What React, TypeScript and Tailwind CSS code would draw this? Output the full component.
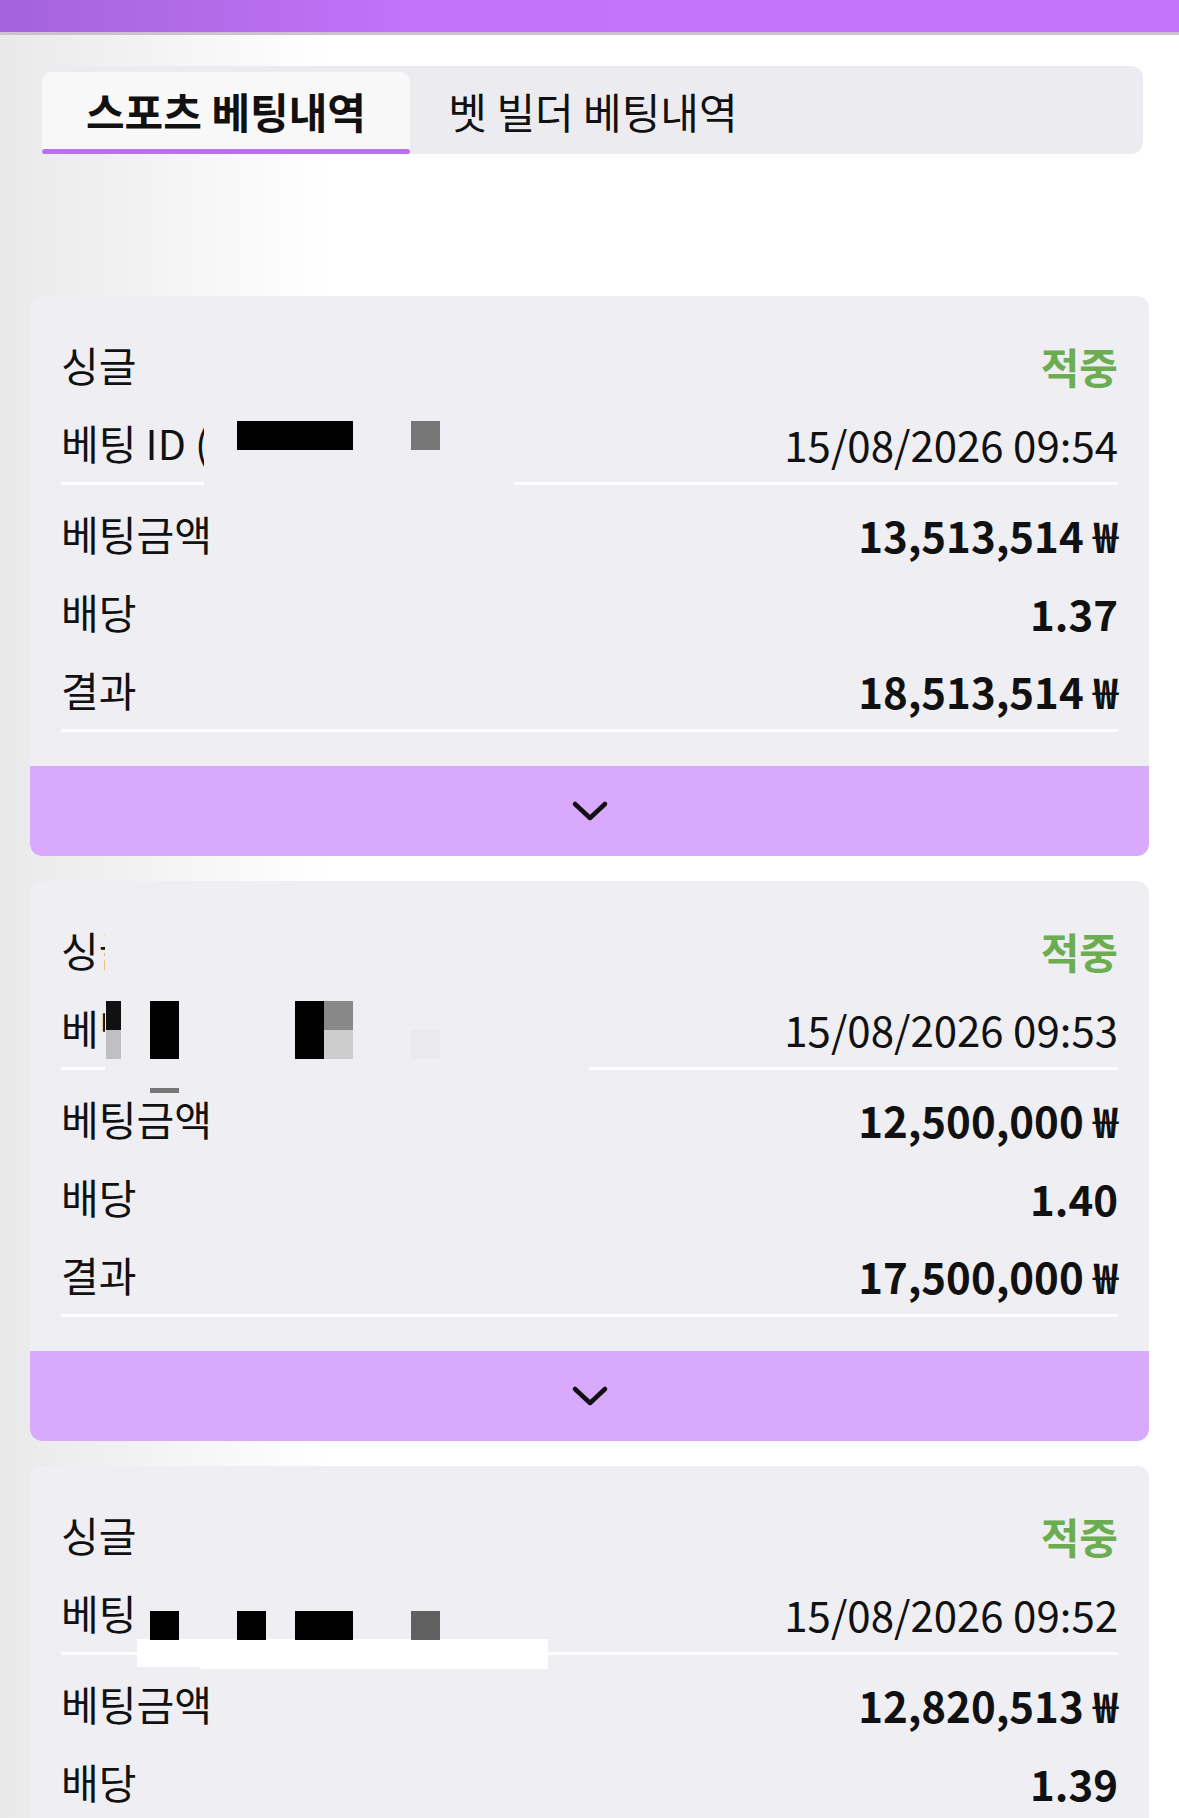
import React from "react";

type Bet = {
  time: string;
  stake: string;
  odds: string;
  result: string;
};

const bets: Bet[] = [
  { time: "15/08/2026 09:54", stake: "13,513,514", odds: "1.37", result: "18,513,514" },
  { time: "15/08/2026 09:53", stake: "12,500,000", odds: "1.40", result: "17,500,000" },
  { time: "15/08/2026 09:52", stake: "12,820,513", odds: "1.39", result: "17,820,513" },
];

const font = { fontFamily: '"Noto Sans CJK KR", "Noto Sans", sans-serif' };

function Block({ x, y, w, h, c }: { x: number; y: number; w: number; h: number; c: string }) {
  // redaction patches sit over the card content
  return (
    <div
      className="absolute"
      style={{ left: x, top: y, width: w, height: h, background: c }}
    />
  );
}

function Redaction({ index }: { index: number }) {
  const bg = "#eeeef3";
  if (index === 0) {
    return (
      <>
        <Block x={174} y={100} w={310} h={92} c={bg} />
        <Block x={207} y={125} w={116} h={29} c="#000" />
        <Block x={381} y={125} w={29} h={29} c="#777" />
      </>
    );
  }
  if (index === 1) {
    return (
      <>
        <Block x={75} y={40} w={484} h={172} c={bg} />
        <Block x={76} y={120} w={15} h={29} c="#111" />
        <Block x={76} y={149} w={15} h={29} c="#c0c0c4" />
        <Block x={120} y={120} w={29} h={58} c="#000" />
        <Block x={265} y={120} w={29} h={58} c="#000" />
        <Block x={294} y={120} w={29} h={29} c="#888" />
        <Block x={294} y={149} w={29} h={29} c="#ccc" />
        <Block x={381} y={149} w={29} h={29} c="#e9e9ee" />
        <Block x={120} y={207} w={29} h={5} c="#777" />
      </>
    );
  }
  return (
    <>
      <Block x={107} y={118} w={411} h={58} c={bg} />
      <Block x={107} y={173} w={411} h={28} c="#fff" />
      <Block x={170} y={190} w={348} h={13} c="#fff" />
      <Block x={120} y={145} w={29} h={29} c="#000" />
      <Block x={207} y={145} w={29} h={29} c="#000" />
      <Block x={265} y={145} w={58} h={29} c="#000" />
      <Block x={381} y={145} w={29} h={29} c="#606060" />
    </>
  );
}

function Row({ label, children }: { label: string; children: React.ReactNode }) {
  return (
    <div className="flex h-[78px] items-center justify-between">
      <span className="text-[41px] text-[#111]">{label}</span>
      {children}
    </div>
  );
}

function BetCard({ bet, index }: { bet: Bet; index: number }) {
  return (
    <div className="relative overflow-hidden rounded-[12px] bg-[#eeeef3]">
      <div className="px-[31px] pt-[30px]">
        <Row label="싱글">
          <span className="text-[42px] font-bold text-[#6cad52]">적중</span>
        </Row>
        <Row label="베팅 ID (">
          <span className="text-[42px] text-[#111]">{bet.time}</span>
        </Row>
        <div className="h-[3px] bg-white" />
        <div className="mt-[10px]">
          <Row label="베팅금액">
            <span className="text-[42px] font-bold text-[#111]">{bet.stake} ₩</span>
          </Row>
          <Row label="배당">
            <span className="text-[42px] font-bold text-[#111]">{bet.odds}</span>
          </Row>
          <Row label="결과">
            <span className="text-[42px] font-bold text-[#111]">{bet.result} ₩</span>
          </Row>
        </div>
        <div className="h-[3px] bg-white" />
      </div>
      <div className="mt-[34px] flex h-[90px] items-center justify-center rounded-b-[12px] bg-[#d8a9fc]">
        <svg width="40" height="26" viewBox="0 0 40 26" fill="none">
          <polyline
            points="5,6 20,20 35,6"
            stroke="#111"
            strokeWidth="4.5"
            strokeLinecap="round"
            strokeLinejoin="round"
          />
        </svg>
      </div>
      <Redaction index={index} />
    </div>
  );
}

export default function App() {
  return (
    <div
      className="min-h-[1818px] w-full overflow-hidden bg-[linear-gradient(to_right,#e9e9e9,#ffffff_28%)]"
      style={font}
    >
      <div className="h-[32px] bg-[linear-gradient(to_right,#a463d9,#c273fa_35%,#c474fb)]" />
      <div className="h-[3px] bg-[#cbc3cf]" />

      <div className="ml-[39px] mr-[36px] mt-[31px] flex h-[88px] rounded-[12px] bg-[#ececf0] pl-[3px] pt-[6px]">
        <div className="flex w-[368px] flex-col overflow-hidden rounded-t-[10px] bg-[#f8f8f9]">
          <div className="flex flex-1 items-center justify-center text-[42px] font-bold text-[#111]">
            스포츠 베팅내역
          </div>
          <div className="h-[5px] rounded-full bg-[#b96ff0]" />
        </div>
        <div className="flex w-[366px] items-center justify-center pb-[6px] text-[42px] text-[#111]">
          벳 빌더 베팅내역
        </div>
      </div>

      <div className="mt-[142px] flex flex-col gap-[25px] px-[30px]">
        {bets.map((b, i) => (
          <BetCard key={b.time} bet={b} index={i} />
        ))}
      </div>
    </div>
  );
}
